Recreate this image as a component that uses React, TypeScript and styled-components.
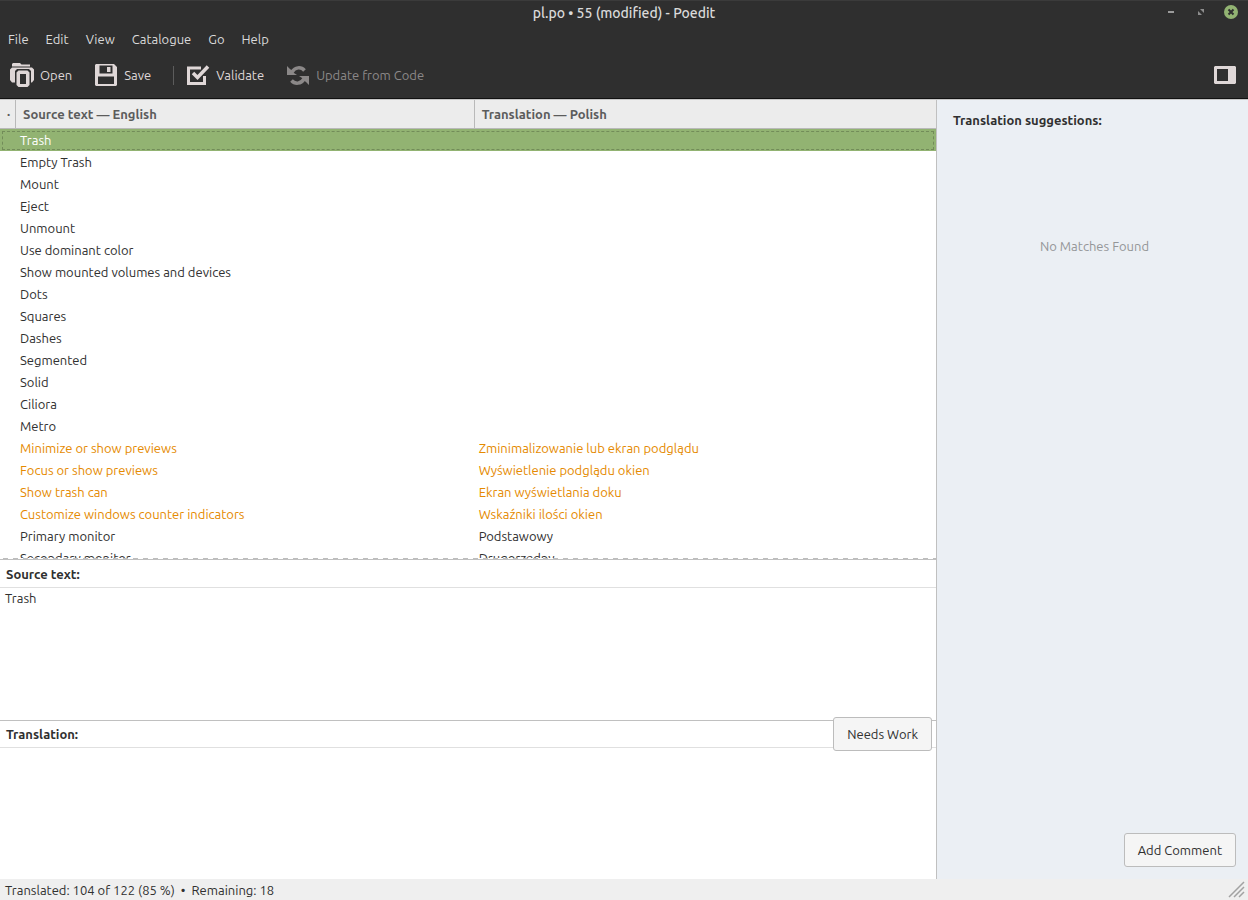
import React from "react";
import styled, { createGlobalStyle, css } from "styled-components";

const Global = createGlobalStyle`
  * { box-sizing: border-box; }
  body { margin: 0; font: 13px/20px "Ubuntu", "Noto Sans", sans-serif; color: #303030; background: #fff; }
  button, textarea { font: inherit; color: inherit; }
`;
const Window = styled.div`height: 100vh; display: flex; flex-direction: column; overflow: hidden;`;
const Chrome = styled.header`background: #2f2f2f; color: #dadada; border-top: 1px solid #3b3b3b; border-bottom: 1px solid #111;`;
const TitleBar = styled.div`display: grid; grid-template-columns: 1fr auto 1fr; align-items: start; height: 25px; padding-top: 2px;`;
const Title = styled.h1`grid-column: 2; margin: 0; font-size: 14px; font-weight: 500;`;
const WindowControls = styled.div`justify-self: end; display: flex; gap: 14px; padding: 1px 9px 0 0;`;
const ControlButton = styled.button`border: 0; padding: 0; background: none; width: 16px; height: 16px; display: flex; svg { display: block; }`;
const MenuBar = styled.nav`display: flex; gap: 1px; height: 26px; align-items: center;`;
const MenuItem = styled.button`border: 0; background: none; padding: 0 8px;`;
const ToolBar = styled.div`display: flex; align-items: center; height: 46px; padding: 0 11px 0 10px;`;
const Tool = styled.button`
  border: 0; background: none; padding: 0; display: flex; align-items: center; gap: 6px;
  margin-right: 22px; color: #dfd7d7;
  &:last-child { margin-right: 0; }
  &:disabled { color: #8b8888; }
`;
const ToolIcon = styled.span`display: flex; justify-content: center; width: 24px; svg { display: block; }`;
const Separator = styled.span`width: 1px; height: 19px; background: #5c5c5c; margin-right: 12px;`;
const Spacer = styled.span`flex: 1;`;
const Body = styled.main`flex: 1; min-height: 0; display: grid; grid-template-columns: 3fr 1fr; border-top: 1px solid #c6c6c6;`;
const Editor = styled.section`min-width: 0; min-height: 0; display: flex; flex-direction: column;`;
const ListPane = styled.div`
  flex: 1; min-height: 0; overflow: hidden; position: relative; border-bottom: 1px solid #c0c0c0;
  &::after {
    content: ""; position: absolute; left: 0; right: 0; bottom: 0; height: 1px;
    background: repeating-linear-gradient(90deg, #fff 0 3px, #bdbdbd 3px 8px, #fff 8px 10px);
  }
`;
const Catalog = styled.table`width: 100%; table-layout: fixed; border-collapse: separate; border-spacing: 0;`;
const Column = styled.col<{ $width?: string }>`width: ${p => p.$width ?? "auto"};`;
const Head = styled.th`
  height: 29px; padding: 0 0 0 7px; background: #ececec; color: #5c5c5c; text-align: left; font-weight: 700;
  border-bottom: 1px solid #b9b9b9; border-left: 1px solid #b9b9b9;
  &:first-child { border-left: 0; }
`;
const Cell = styled.td`height: 22px; padding: 0 5px; white-space: nowrap;`;
const Row = styled.tr<{ $selected?: boolean; $fuzzy?: boolean }>`
  position: relative; color: ${p => (p.$selected ? "#fff" : p.$fuzzy ? "#e58a00" : "inherit")};
  ${p => p.$selected && css`
    background: #92b372;
    ${Cell}:first-child::after { content: ""; position: absolute; inset: 2px 2px 1px 2px; border: 1px dashed #728c59; }
  `}
`;
const Field = styled.div`display: flex; flex-direction: column; & + & { border-top: 1px solid #c0c0c0; }`;
const FieldBar = styled.div<{ $height: number }>`
  display: flex; align-items: center; justify-content: space-between; height: ${p => p.$height}px;
  padding: 0 4px 0 6px; border-bottom: 1px solid #e0e0e0;
`;
const FieldLabel = styled.label`font-weight: 700;`;
const PushButton = styled.button`
  position: relative; flex: none; height: 34px; padding: 0 13px; background: #f5f5f5; color: #303030;
  border: 1px solid #bcbcbc; border-radius: 3px;
`;
const TextArea = styled.textarea<{ $height: number }>`
  display: block; width: 100%; height: ${p => p.$height}px; border: 0; outline: 0; resize: none; padding: 0 5px; background: #fff;
`;
const Sidebar = styled.aside`
  display: flex; flex-direction: column; background: #ebeff4; border-left: 1px solid #c0c0c0; padding: 10px 12px 12px 16px;
`;
const SideTitle = styled.h2`margin: 0; font-size: 13px; font-weight: 700;`;
const Empty = styled.p`margin: 106px 0 0; text-align: center; color: #949698;`;
const SideActions = styled.div`margin-top: auto; display: flex; justify-content: flex-end;`;
const StatusBar = styled.footer`
  height: 21px; display: flex; align-items: center; justify-content: space-between; padding: 0 3px 0 5px; background: #efefef;
`;
const StatusText = styled.span`display: flex; gap: 6px;`;

type Entry = { source: string; target?: string; fuzzy?: boolean };
const entries: Entry[] = [
  ...["Trash", "Empty Trash", "Mount", "Eject", "Unmount", "Use dominant color", "Show mounted volumes and devices",
    "Dots", "Squares", "Dashes", "Segmented", "Solid", "Ciliora", "Metro"].map(source => ({ source })),
  { source: "Minimize or show previews", target: "Zminimalizowanie lub ekran podglądu", fuzzy: true },
  { source: "Focus or show previews", target: "Wyświetlenie podglądu okien", fuzzy: true },
  { source: "Show trash can", target: "Ekran wyświetlania doku", fuzzy: true },
  { source: "Customize windows counter indicators", target: "Wskaźniki ilości okien", fuzzy: true },
  { source: "Primary monitor", target: "Podstawowy" },
  { source: "Secondary monitor", target: "Drugorzędny" },
];

const OpenIcon = () => (
  <svg width="24" height="24" viewBox="0 0 24 24" fill="currentColor">
    <path d="M3 0h7l1.500 1.500H20v2H2V1z" />
    <path d="M2 4.500h20l2 2V17l-2 2.500h-1V8l-2-2H7L5 8v11.500H2L0 17V6.500z" />
    <path fillRule="evenodd" d="M8.500 7.500h9l2 2v12.500l-2 2h-9l-2-2V9.500zM10 11v10h6V11z" />
  </svg>
);
const SaveIcon = () => (
  <svg width="22" height="22" viewBox="0 0 22 22" fill="currentColor">
    <path fillRule="evenodd" d="M1 0h18l3 3v18l-1 1H1l-1-1V1zM4.500 1.500v8h13v-8zM3 12.500v7.500h16v-7.500z" />
    <path d="M12 3h3.500v5H12z" />
  </svg>
);
const ValidateIcon = () => (
  <svg width="24" height="22" viewBox="0 0 24 22" fill="none" stroke="currentColor" strokeWidth="3">
    <path d="M15 4H2.500v15.500h16V12" /><path d="M7 9l4.500 4.500L22 2.500" strokeWidth="3.500" />
  </svg>
);
const UpdateIcon = () => (
  <svg width="22" height="19" viewBox="0 0 22 19" fill="none" stroke="currentColor" strokeWidth="3.500">
    <path d="M5 6C8 1 14 .5 17.500 4.500M17 13c-3 5-9 5.500-12.500 1.500" />
    <path d="M0 0l3 3 2 1.500L7 7l3 2H0zM22 19l-3-3-2-1.500L15 12l-3-2h10z" fill="currentColor" stroke="none" />
  </svg>
);
const SidebarIcon = () => (
  <svg width="22" height="18" viewBox="0 0 22 18" fill="currentColor">
    <path fillRule="evenodd" d="M1 0h20l1 1v16l-1 1H1l-1-1V1zM3 3v12h11V3z" />
  </svg>
);
const Grip = () => (
  <svg width="17" height="17" viewBox="0 0 17 17" stroke="#a2a2a2" strokeWidth="1.500">
    <path d="M1 16L16 1M6 16L16 6M11 16L16 11" />
  </svg>
);

export default function App() {
  return (
    <Window>
      <Global />
      <Chrome>
        <TitleBar>
          <Title>pl.po • 55 (modified) - Poedit</Title>
          <WindowControls>
            <ControlButton aria-label="Minimise"><svg width="16" height="16"><path d="M5 8h6" stroke="#9b9b9b" strokeWidth="2" /></svg></ControlButton>
            <ControlButton aria-label="Restore"><svg width="16" height="16"><path d="M7 5h4v4zM5 7v4h4z" fill="#8d8d8d" /></svg></ControlButton>
            <ControlButton aria-label="Close"><svg width="16" height="16"><circle cx="8" cy="8" r="7" fill="#92b372" /><path d="M5.500 5.500l5 5M10.500 5.500l-5 5" stroke="#2f2f2f" strokeWidth="2" /></svg></ControlButton>
          </WindowControls>
        </TitleBar>
        <MenuBar>{["File", "Edit", "View", "Catalogue", "Go", "Help"].map(m => <MenuItem key={m}>{m}</MenuItem>)}</MenuBar>
        <ToolBar>
          <Tool><ToolIcon><OpenIcon /></ToolIcon>Open</Tool>
          <Tool><ToolIcon><SaveIcon /></ToolIcon>Save</Tool>
          <Separator />
          <Tool><ToolIcon><ValidateIcon /></ToolIcon>Validate</Tool>
          <Tool disabled><ToolIcon><UpdateIcon /></ToolIcon>Update from Code</Tool>
          <Spacer />
          <Tool aria-label="Toggle sidebar"><ToolIcon><SidebarIcon /></ToolIcon></Tool>
        </ToolBar>
      </Chrome>
      <Body>
        <Editor>
          <ListPane>
            <Catalog>
              <colgroup><Column $width="15px" /><Column $width="49%" /><Column /></colgroup>
              <thead><tr><Head>·</Head><Head>Source text — English</Head><Head>Translation — Polish</Head></tr></thead>
              <tbody>
                {entries.map((e, i) => (
                  <Row key={e.source} $selected={i === 0} $fuzzy={e.fuzzy}><Cell /><Cell>{e.source}</Cell><Cell>{e.target}</Cell></Row>
                ))}
              </tbody>
            </Catalog>
          </ListPane>
          <Field>
            <FieldBar $height={28}><FieldLabel htmlFor="source">Source text:</FieldLabel></FieldBar>
            <TextArea id="source" $height={132} readOnly value="Trash" />
          </Field>
          <Field>
            <FieldBar $height={27}><FieldLabel htmlFor="target">Translation:</FieldLabel><PushButton>Needs Work</PushButton></FieldBar>
            <TextArea id="target" $height={131} />
          </Field>
        </Editor>
        <Sidebar>
          <SideTitle>Translation suggestions:</SideTitle>
          <Empty>No Matches Found</Empty>
          <SideActions><PushButton>Add Comment</PushButton></SideActions>
        </Sidebar>
      </Body>
      <StatusBar>
        <StatusText><span>Translated: 104 of 122 (85 %)</span><span>•</span><span>Remaining: 18</span></StatusText>
        <Grip />
      </StatusBar>
    </Window>
  );
}
